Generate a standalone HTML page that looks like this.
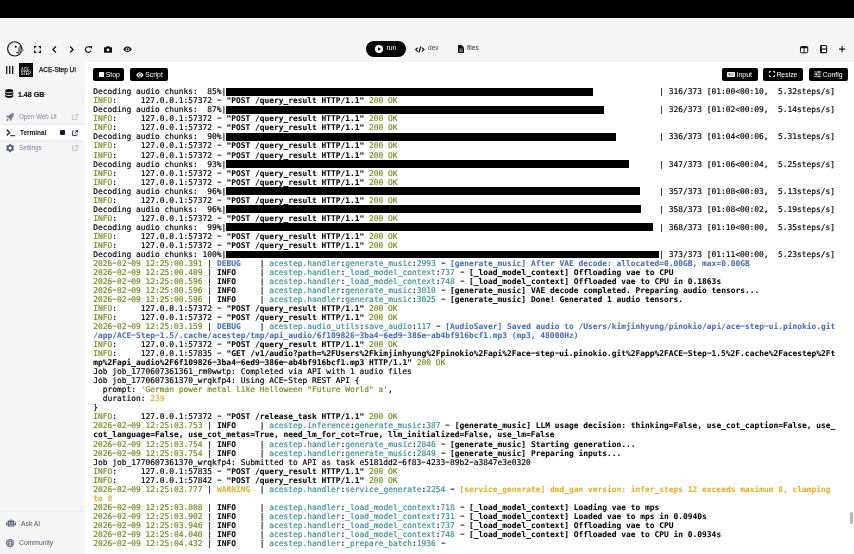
<!DOCTYPE html>
<html lang="en">
<head>
<meta charset="utf-8">
<title>ACE-Step UI</title>
<style>
*{box-sizing:border-box;margin:0;padding:0}
body{will-change:transform}
html,body{width:854px;height:554px;overflow:hidden;background:#f5f5f5;font-family:"Liberation Sans",sans-serif;color:#111}
#topbar{position:absolute;left:0;top:0;width:854px;height:18px;background:#000}
#header{position:absolute;left:0;top:18px;width:854px;height:44px;background:#f5f5f5}
#sidebar{position:absolute;left:0;top:62px;width:85px;height:492px;background:#f5f5f5}
#main{position:absolute;left:85px;top:62px;width:769px;height:492px;background:#fff;box-shadow:-0.4px 0 0 #fff}
.abs{position:absolute}
svg{display:block;position:absolute;overflow:visible}
.btn{position:absolute;top:5.6px;height:13.9px;background:#000;color:#fff;border-radius:2px;font-size:6.9px;line-height:13.9px;white-space:nowrap}
.btn span{position:absolute;top:0}
#term{position:absolute;left:8.2px;letter-spacing:0.0055px;top:25.3px;width:760px;font-family:"DejaVu Sans Mono","Liberation Mono",monospace;font-size:7.905px;line-height:9.035px;color:#000;-webkit-text-stroke:0.17px currentColor}
.ln{height:9.035px;white-space:pre}
.ln b{font-weight:bold;-webkit-text-stroke:0.06px currentColor}
.ln i{display:inline-block;font-style:normal;transform:translateY(-0.7px) scale(1.75,0.85)}
.g{color:#728c22}
.c{color:#3a8e9b}
.bl{color:#4870b2}
.y{color:#e0b030}
.yn{color:#e0b030}
.bar{display:inline-block;height:7.85px;background:#000;color:#000;overflow:hidden;vertical-align:top;margin-top:0.7px;line-height:7.75px}
.gap{display:inline-block;height:7.6px;overflow:hidden;vertical-align:top}
.sitem{position:absolute;left:0;width:85px;font-size:7px;color:#7d8aa3;white-space:nowrap}
.sitem span{position:absolute;transform-origin:0 50%}
.sx{transform-origin:0 50%}
</style>
</head>
<body>
<div id="topbar"></div>
<div id="header">
  <!-- pinokio logo -->
  <svg style="left:6px;top:22px" width="20" height="18" viewBox="0 0 20 18">
    <circle cx="8.7" cy="8.85" r="7.1" fill="#f5f5f5" stroke="#111" stroke-width="1.1"/>
    <circle cx="9.7" cy="6.8" r="1" fill="#111"/>
    <circle cx="14" cy="6.7" r="0.75" fill="#111"/>
    <path d="M11.6 7.5 L18.2 10.2 L12.2 12.6 Z" fill="#f5f5f5"/>
    <path d="M12.3 8 H15.4 M12.1 9.1 H17 M12 10.2 H17.9 M12.2 11.3 H16.4" stroke="#222" stroke-width="0.66" fill="none"/>
    <path d="M10.3 12.7 H13.1" stroke="#111" stroke-width="1.1" fill="none"/>
  </svg>
  <!-- expand -->
  <svg style="left:34px;top:27.8px" width="7" height="7" viewBox="0 0 7 7">
    <path d="M0.6 2.4 V0.6 H2.4 M4.6 0.6 H6.4 V2.4 M6.4 4.6 V6.4 H4.6 M2.4 6.4 H0.6 V4.6" fill="none" stroke="#111" stroke-width="1.2"/>
  </svg>
  <!-- chevrons -->
  <svg style="left:52px;top:27.8px" width="5" height="7" viewBox="0 0 5 7">
    <path d="M3.9 0.5 L0.9 3.5 L3.9 6.5" fill="none" stroke="#111" stroke-width="1.25"/>
  </svg>
  <svg style="left:68.6px;top:27.8px" width="5" height="7" viewBox="0 0 5 7">
    <path d="M1.1 0.5 L4.1 3.5 L1.1 6.5" fill="none" stroke="#111" stroke-width="1.25"/>
  </svg>
  <!-- reload -->
  <svg style="left:85px;top:28px" width="7.4" height="7" viewBox="0 0 7.4 7">
    <path d="M5.9 4.6 A2.8 2.8 0 1 1 5.2 1.5" fill="none" stroke="#111" stroke-width="1.2"/>
    <path d="M4.1 0 H7.1 V3 Z" fill="#111"/>
  </svg>
  <!-- camera -->
  <svg style="left:104px;top:27.6px" width="8" height="7" viewBox="0 0 8 7">
    <path d="M0 1.8 Q0 1.2 .6 1.2 H2 L2.6 0.2 H5.4 L6 1.2 H7.4 Q8 1.2 8 1.8 V6.2 Q8 6.8 7.4 6.8 H0.6 Q0 6.8 0 6.2 Z" fill="#111"/>
    <circle cx="4" cy="3.9" r="1.3" fill="#f5f5f5"/>
  </svg>
  <!-- eye -->
  <svg style="left:123px;top:28px" width="9" height="6.6" viewBox="0 0 9 6.6">
    <path d="M0.2 3.3 Q2 0.3 4.5 0.3 Q7 0.3 8.8 3.3 Q7 6.3 4.5 6.3 Q2 6.3 0.2 3.3 Z" fill="#111"/>
    <circle cx="4.5" cy="3.3" r="1.9" fill="#f5f5f5"/>
    <circle cx="4.5" cy="3.3" r="1.15" fill="#111"/>
  </svg>
  <!-- run pill -->
  <div class="abs" style="left:365.9px;top:23.2px;width:39.7px;height:15.7px;border-radius:8px;background:#000"></div>
  <svg style="left:375.4px;top:27px" width="8" height="8" viewBox="0 0 8 8">
    <circle cx="4" cy="4" r="4" fill="#fff"/>
    <path d="M3 2.2 L6 4 L3 5.8 Z" fill="#000"/>
  </svg>
  <div class="abs" style="left:386.4px;top:25px;font-size:6.8px;line-height:9px;color:#fff">run</div>
  <!-- dev -->
  <svg style="left:415.3px;top:27.5px" width="9.6" height="7.2" viewBox="0 0 10.4 7.2">
    <path d="M2.9 1.4 L0.8 3.6 L2.9 5.8 M7.5 1.4 L9.6 3.6 L7.5 5.8 M6.2 0.3 L4.2 6.9" fill="none" stroke="#111" stroke-width="1.35"/>
  </svg>
  <div class="abs" style="left:428px;top:25px;font-size:6.6px;line-height:9px;color:#444">dev</div>
  <!-- files -->
  <svg style="left:458px;top:27.2px" width="6" height="8" viewBox="0 0 6 8">
    <path d="M0 0.6 Q0 0 .6 0 H3.6 L6 2.4 V7.4 Q6 8 5.4 8 H0.6 Q0 8 0 7.4 Z" fill="#111"/>
    <path d="M1.3 4 H4.7 M1.3 5.4 H4.7 M1.3 6.7 H4.7" stroke="#f5f5f5" stroke-width="0.5"/>
  </svg>
  <div class="abs" style="left:467px;top:25px;font-size:6.6px;line-height:9px;color:#333">files</div>
  <!-- right icons -->
  <svg style="left:800px;top:27.6px" width="8.2" height="7.3" viewBox="0 0 8.2 7.3">
    <rect x="0.5" y="0.5" width="7.2" height="6.3" rx="1" fill="#fbfbfb" stroke="#111" stroke-width="1"/>
    <path d="M0.5 1.5 H7.7" stroke="#111" stroke-width="1.4"/><path d="M4.1 1 V6.8" stroke="#111" stroke-width="1"/>
  </svg>
  <svg style="left:820px;top:27.2px" width="7.2" height="8.2" viewBox="0 0 7.2 8.2">
    <rect x="0.55" y="0.55" width="6.1" height="7.1" rx="1" fill="#fbfbfb" stroke="#111" stroke-width="1.1"/>
    <path d="M1.1 0.6 V7.6" stroke="#111" stroke-width="1.5"/>
    <path d="M0.5 4.1 H6.7" stroke="#111" stroke-width="1.2"/>
  </svg>
  <svg style="left:839px;top:28.1px" width="6.2" height="6.2" viewBox="0 0 6.2 6.2">
    <path d="M3.1 0 V6.2 M0 3.1 H6.2" stroke="#111" stroke-width="1.1"/>
  </svg>
</div>

<div id="sidebar">
  <!-- app row -->
  <svg style="left:5.8px;top:3.9px" width="7.4" height="7.9" viewBox="0 0 7.4 7.9">
    <path d="M0.7 0 V7.9 M3.7 0 V7.9 M6.7 0 V7.9" stroke="#111" stroke-width="1.25"/>
  </svg>
  <div class="abs" style="left:19px;top:1px;width:14.2px;height:14px;background:#000;overflow:hidden">
    <div class="abs" style="left:2.1px;top:5px;font-size:4.5px;line-height:4px;font-weight:bold;color:#ddd;transform:scaleX(0.83);transform-origin:0 0;white-space:nowrap">ACE-<br>STEP</div>
  </div>
  <div class="abs sx" style="left:39px;top:3.2px;font-size:7px;line-height:9px;color:#111;white-space:nowrap;-webkit-text-stroke:0.25px #111;transform:scaleX(0.926)">ACE-Step UI</div>
  <!-- disk -->
  <svg style="left:5.4px;top:27.2px" width="8.4" height="9.4" viewBox="0 0 8 9">
    <ellipse cx="4" cy="1.6" rx="3.9" ry="1.6" fill="#111"/>
    <path d="M0.1 2.8 Q4 5.2 7.9 2.8 V4.7 Q4 7 0.1 4.7 Z M0.1 5.6 Q4 8 7.9 5.6 V7.4 Q4 9.7 0.1 7.4 Z" fill="#111"/>
  </svg>
  <div class="abs sx" style="left:18.2px;top:28.2px;font-size:7.3px;line-height:9px;font-weight:bold;color:#111;white-space:nowrap;-webkit-text-stroke:0.2px #111;transform:scaleX(0.965)">1.48 GB</div>

  <div class="abs" style="left:83.6px;top:26px;width:0.7px;height:14px;background:#ebebeb"></div>
  <!-- Open Web UI -->
  <div class="sitem" style="top:46px;height:16px">
    <svg style="left:6px;top:5.2px" width="8.2" height="8.2" viewBox="0 0 8.4 8.4">
      <path d="M8.2 0.2 Q8.4 3.4 5.9 5.4 L5.6 7.4 L4.2 8.2 L3.9 6.2 L2.2 4.5 L0.2 4.2 L1 2.8 L3 2.5 Q5 0 8.2 0.2 Z" fill="#6f7d98"/>
      <path d="M0.4 8 Q0.3 6.2 1.6 5.6 L2.8 6.8 Q2.2 8.1 0.4 8 Z" fill="#6f7d98"/>
    </svg>
    <span style="left:19px;top:3.9px;line-height:9px;transform:scaleX(0.895)">Open Web UI</span>
    <svg style="left:71.5px;top:6.2px" width="6" height="6" viewBox="0 0 6 6">
      <path d="M2.4 0.9 H0.9 Q0.4 0.9 0.4 1.4 V5.1 Q0.4 5.6 0.9 5.6 H4.6 Q5.1 5.6 5.1 5.1 V3.6 M3.5 0.4 H5.6 V2.5 M5.6 0.4 L2.8 3.2" fill="none" stroke="#a9b2c3" stroke-width="0.75"/>
    </svg>
  </div>
  <!-- Terminal (selected) -->
  <div class="sitem" style="top:63px;height:15.2px;background:#fff;box-shadow:0 0 4px rgba(0,0,0,0.08);color:#111">
    <svg style="left:6px;top:4.4px" width="9.2" height="7.4" viewBox="0 0 9.2 7.4">
      <path d="M0.6 0.5 L3.7 3.5 L0.6 6.5" fill="none" stroke="#1c2540" stroke-width="1.25"/>
      <path d="M4.4 6.7 H9.1" stroke="#1c2540" stroke-width="1.1"/>
    </svg>
    <span style="left:20px;top:3.4px;line-height:9px;font-weight:bold;font-size:6.8px;transform:scaleX(0.95)">Terminal</span>
    <div class="abs" style="left:59.9px;top:4.8px;width:5.1px;height:4.9px;background:#131a33;border-radius:1px"></div>
    <svg style="left:71.5px;top:4.7px" width="6" height="6" viewBox="0 0 6 6">
      <path d="M2.4 0.9 H0.9 Q0.4 0.9 0.4 1.4 V5.1 Q0.4 5.6 0.9 5.6 H4.6 Q5.1 5.6 5.1 5.1 V3.6 M3.5 0.4 H5.6 V2.5 M5.6 0.4 L2.8 3.2" fill="none" stroke="#1c2540" stroke-width="0.9"/>
    </svg>
  </div>
  <!-- Settings -->
  <div class="sitem" style="top:78px;height:16px">
    <svg style="left:6px;top:4.2px" width="8.2" height="8.2" viewBox="0 0 8.4 8.4">
      <circle cx="4.2" cy="4.2" r="2.5" fill="none" stroke="#56627d" stroke-width="1.9"/>
      <g fill="#56627d">
        <rect x="3.3" y="0" width="1.8" height="1.6"/><rect x="3.3" y="6.8" width="1.8" height="1.6"/>
        <rect x="3.3" y="0" width="1.8" height="1.6" transform="rotate(60 4.2 4.2)"/><rect x="3.3" y="6.8" width="1.8" height="1.6" transform="rotate(60 4.2 4.2)"/>
        <rect x="3.3" y="0" width="1.8" height="1.6" transform="rotate(120 4.2 4.2)"/><rect x="3.3" y="6.8" width="1.8" height="1.6" transform="rotate(120 4.2 4.2)"/>
      </g>
    </svg>
    <span style="left:19px;top:3.4px;line-height:9px;transform:scaleX(0.89)">Settings</span>
    <svg style="left:71.5px;top:5.4px" width="6" height="6" viewBox="0 0 6 6">
      <path d="M2.4 0.9 H0.9 Q0.4 0.9 0.4 1.4 V5.1 Q0.4 5.6 0.9 5.6 H4.6 Q5.1 5.6 5.1 5.1 V3.6 M3.5 0.4 H5.6 V2.5 M5.6 0.4 L2.8 3.2" fill="none" stroke="#a9b2c3" stroke-width="0.75"/>
    </svg>
  </div>

  <!-- bottom -->
  <div class="abs" style="left:0;top:449px;width:85px;height:1px;background:#ebebeb"></div>
  <div class="sitem" style="top:453px;height:18px;color:#4a556e">
    <svg style="left:6px;top:4.4px" width="10" height="8" viewBox="0 0 10 8">
      <rect x="1.5" y="1.6" width="7" height="6" rx="1.2" fill="#56627d"/>
      <rect x="0" y="3.6" width="1" height="2.6" fill="#56627d"/><rect x="9" y="3.6" width="1" height="2.6" fill="#56627d"/>
      <rect x="4.6" y="0" width="0.8" height="1.8" fill="#56627d"/>
      <circle cx="3.6" cy="4" r="0.8" fill="#f5f5f5"/><circle cx="6.4" cy="4" r="0.8" fill="#f5f5f5"/>
      <rect x="3.2" y="5.7" width="3.6" height="0.7" fill="#f5f5f5"/>
    </svg>
    <span style="left:20.5px;top:4px;line-height:9px;transform:scaleX(0.97)">Ask AI</span>
  </div>
  <div class="sitem" style="top:471px;height:18px;color:#4a556e">
    <svg style="left:6px;top:5.8px" width="8.2" height="8.2" viewBox="0 0 8.4 8.4">
      <circle cx="4.2" cy="4.2" r="3.8" fill="none" stroke="#56627d" stroke-width="0.9"/>
      <ellipse cx="4.2" cy="4.2" rx="1.7" ry="3.8" fill="none" stroke="#56627d" stroke-width="0.8"/>
      <path d="M0.4 4.2 H8 M1 2.3 H7.4 M1 6.1 H7.4" stroke="#56627d" stroke-width="0.8"/>
    </svg>
    <span style="left:19px;top:4.8px;line-height:9px;transform:scaleX(0.965)">Community</span>
  </div>
</div>

<div id="main">
  <div class="btn" style="left:8.1px;width:31.3px">
    <div class="abs" style="left:5.8px;top:4.1px;width:5px;height:5.4px;background:#fff;border-radius:0.6px"></div>
    <span style="left:12.6px">Stop</span>
  </div>
  <div class="btn" style="left:45px;width:38.4px">
    <svg style="left:5.6px;top:4px" width="7.8" height="5.9" viewBox="0 0 9 6.6">
      <path d="M0.2 3.3 Q2 0.3 4.5 0.3 Q7 0.3 8.8 3.3 Q7 6.3 4.5 6.3 Q2 6.3 0.2 3.3 Z" fill="#fff"/>
      <circle cx="4.5" cy="3.3" r="2" fill="#000"/>
      <circle cx="4.5" cy="3.3" r="1.1" fill="#fff"/>
    </svg>
    <span style="left:15.2px">Script</span>
  </div>
  <div class="btn" style="left:637px;width:35.7px">
    <svg style="left:5px;top:4.4px" width="8" height="5" viewBox="0 0 8 5">
      <rect x="0" y="0" width="8" height="5" rx="0.7" fill="#fff"/>
      <path d="M1 1.3 H7 M1 2.5 H7 M2 3.8 H6" stroke="#000" stroke-width="0.6" stroke-dasharray="0.7 0.5"/>
    </svg>
    <span style="left:14.6px">Input</span>
  </div>
  <div class="btn" style="left:678px;width:40px">
    <svg style="left:5.6px;top:3.8px" width="6" height="6" viewBox="0 0 7 7">
      <path d="M0.5 2.3 V0.5 H2.3 M4.7 0.5 H6.5 V2.3 M6.5 4.7 V6.5 H4.7 M2.3 6.5 H0.5 V4.7" fill="none" stroke="#fff" stroke-width="1.1"/>
    </svg>
    <span style="left:13.4px">Resize</span>
  </div>
  <div class="btn" style="left:723.7px;width:39.5px">
    <svg style="left:5.6px;top:3.9px" width="7.2" height="6.4" viewBox="0 0 7.2 6.4">
      <path d="M0 1 H7.2 M0 3.2 H7.2 M0 5.4 H7.2" stroke="#fff" stroke-width="0.7"/>
      <path d="M4.9 0 V2 M2.3 2.2 V4.2 M4.9 4.4 V6.4" stroke="#fff" stroke-width="1"/>
    </svg>
    <span style="left:14px">Config</span>
  </div>
  <div id="term">
<div class="ln"><span>Decoding audio chunks:  85%|</span><span class="bar" style="width:366.22px">█████████████████████████████████████████████████████████████████████████████</span><span class="gap" style="width:66.59px">              </span><span>| 316/373 [01:00&lt;00:10,  5.32steps/s]</span></div><div class="ln"><span class="g">INFO</span>:     127.0.0.1:57372 <i>-</i> <b>"POST /query_result HTTP/1.1"</b> <span class="g">200 OK</span></div><div class="ln"><span>Decoding audio chunks:  87%|</span><span class="bar" style="width:378.11px">███████████████████████████████████████████████████████████████████████████████▌</span><span class="gap" style="width:54.70px">           </span><span>| 326/373 [01:02&lt;00:09,  5.14steps/s]</span></div><div class="ln"><span class="g">INFO</span>:     127.0.0.1:57372 <i>-</i> <b>"POST /query_result HTTP/1.1"</b> <span class="g">200 OK</span></div><div class="ln"><span class="g">INFO</span>:     127.0.0.1:57372 <i>-</i> <b>"POST /query_result HTTP/1.1"</b> <span class="g">200 OK</span></div><div class="ln"><span>Decoding audio chunks:  90%|</span><span class="bar" style="width:389.41px">█████████████████████████████████████████████████████████████████████████████████▉</span><span class="gap" style="width:43.40px">         </span><span>| 336/373 [01:04&lt;00:06,  5.31steps/s]</span></div><div class="ln"><span class="g">INFO</span>:     127.0.0.1:57372 <i>-</i> <b>"POST /query_result HTTP/1.1"</b> <span class="g">200 OK</span></div><div class="ln"><span class="g">INFO</span>:     127.0.0.1:57372 <i>-</i> <b>"POST /query_result HTTP/1.1"</b> <span class="g">200 OK</span></div><div class="ln"><span>Decoding audio chunks:  93%|</span><span class="bar" style="width:402.48px">████████████████████████████████████████████████████████████████████████████████████▋</span><span class="gap" style="width:30.32px">      </span><span>| 347/373 [01:06&lt;00:04,  5.25steps/s]</span></div><div class="ln"><span class="g">INFO</span>:     127.0.0.1:57372 <i>-</i> <b>"POST /query_result HTTP/1.1"</b> <span class="g">200 OK</span></div><div class="ln"><span class="g">INFO</span>:     127.0.0.1:57372 <i>-</i> <b>"POST /query_result HTTP/1.1"</b> <span class="g">200 OK</span></div><div class="ln"><span>Decoding audio chunks:  96%|</span><span class="bar" style="width:413.78px">███████████████████████████████████████████████████████████████████████████████████████</span><span class="gap" style="width:19.02px">    </span><span>| 357/373 [01:08&lt;00:03,  5.13steps/s]</span></div><div class="ln"><span class="g">INFO</span>:     127.0.0.1:57372 <i>-</i> <b>"POST /query_result HTTP/1.1"</b> <span class="g">200 OK</span></div><div class="ln"><span>Decoding audio chunks:  96%|</span><span class="bar" style="width:414.97px">███████████████████████████████████████████████████████████████████████████████████████▎</span><span class="gap" style="width:17.84px">   </span><span>| 358/373 [01:08&lt;00:02,  5.19steps/s]</span></div><div class="ln"><span class="g">INFO</span>:     127.0.0.1:57372 <i>-</i> <b>"POST /query_result HTTP/1.1"</b> <span class="g">200 OK</span></div><div class="ln"><span>Decoding audio chunks:  99%|</span><span class="bar" style="width:426.86px">█████████████████████████████████████████████████████████████████████████████████████████▊</span><span class="gap" style="width:5.95px"> </span><span>| 368/373 [01:10&lt;00:00,  5.35steps/s]</span></div><div class="ln"><span class="g">INFO</span>:     127.0.0.1:57372 <i>-</i> <b>"POST /query_result HTTP/1.1"</b> <span class="g">200 OK</span></div><div class="ln"><span class="g">INFO</span>:     127.0.0.1:57372 <i>-</i> <b>"POST /query_result HTTP/1.1"</b> <span class="g">200 OK</span></div><div class="ln"><span>Decoding audio chunks: 100%|</span><span class="bar" style="width:432.81px">███████████████████████████████████████████████████████████████████████████████████████████</span><span class="gap" style="width:0.00px"></span><span>| 373/373 [01:11&lt;00:00,  5.23steps/s]</span></div><div class="ln"><span class="g">2026<i>-</i>02<i>-</i>09 12:25:00.391</span> | <b class="bl">DEBUG   </b> | <span class="c">acestep.handler</span>:<span class="c">generate_music</span>:<span class="c">2993</span> <i>-</i> <b class="bl">[generate_music] After VAE decode: allocated=0.00GB, max=0.00GB</b></div><div class="ln"><span class="g">2026<i>-</i>02<i>-</i>09 12:25:00.409</span> | <b class="">INFO    </b> | <span class="c">acestep.handler</span>:<span class="c">_load_model_context</span>:<span class="c">737</span> <i>-</i> <b class="">[_load_model_context] Offloading vae to CPU</b></div><div class="ln"><span class="g">2026<i>-</i>02<i>-</i>09 12:25:00.596</span> | <b class="">INFO    </b> | <span class="c">acestep.handler</span>:<span class="c">_load_model_context</span>:<span class="c">748</span> <i>-</i> <b class="">[_load_model_context] Offloaded vae to CPU in 0.1863s</b></div><div class="ln"><span class="g">2026<i>-</i>02<i>-</i>09 12:25:00.596</span> | <b class="">INFO    </b> | <span class="c">acestep.handler</span>:<span class="c">generate_music</span>:<span class="c">3010</span> <i>-</i> <b class="">[generate_music] VAE decode completed. Preparing audio tensors...</b></div><div class="ln"><span class="g">2026<i>-</i>02<i>-</i>09 12:25:00.596</span> | <b class="">INFO    </b> | <span class="c">acestep.handler</span>:<span class="c">generate_music</span>:<span class="c">3025</span> <i>-</i> <b class="">[generate_music] Done! Generated 1 audio tensors.</b></div><div class="ln"><span class="g">INFO</span>:     127.0.0.1:57372 <i>-</i> <b>"POST /query_result HTTP/1.1"</b> <span class="g">200 OK</span></div><div class="ln"><span class="g">INFO</span>:     127.0.0.1:57372 <i>-</i> <b>"POST /query_result HTTP/1.1"</b> <span class="g">200 OK</span></div><div class="ln"><span class="g">2026<i>-</i>02<i>-</i>09 12:25:03.159</span> | <b class="bl">DEBUG   </b> | <span class="c">acestep.audio_utils</span>:<span class="c">save_audio</span>:<span class="c">117</span> <i>-</i> <b class="bl">[AudioSaver] Saved audio to /Users/kimjinhyung/pinokio/api/ace<i>-</i>step<i>-</i>ui.pinokio.git</b></div><div class="ln"><b class="bl">/app/ACE<i>-</i>Step<i>-</i>1.5/.cache/acestep/tmp/api_audio/6f109826<i>-</i>3ba4<i>-</i>6ed9<i>-</i>386e<i>-</i>ab4bf916bcf1.mp3 (mp3, 48000Hz)</b></div><div class="ln"><span class="g">INFO</span>:     127.0.0.1:57372 <i>-</i> <b>"POST /query_result HTTP/1.1"</b> <span class="g">200 OK</span></div><div class="ln"><span class="g">INFO</span>:     127.0.0.1:57835 <i>-</i> <b>"GET /v1/audio?path=%2FUsers%2Fkimjinhyung%2Fpinokio%2Fapi%2Face<i>-</i>step<i>-</i>ui.pinokio.git%2Fapp%2FACE<i>-</i>Step<i>-</i>1.5%2F.cache%2Facestep%2Ft</b></div><div class="ln"><b>mp%2Fapi_audio%2F6f109826<i>-</i>3ba4<i>-</i>6ed9<i>-</i>386e<i>-</i>ab4bf916bcf1.mp3 HTTP/1.1"</b> <span class="g">200 OK</span></div><div class="ln">Job job_1770607361361_rm0wwtp: Completed via API with 1 audio files</div><div class="ln">Job job_1770607361370_wrqkfp4: Using ACE<i>-</i>Step REST API {</div><div class="ln">  prompt: <span class="g">'German power metal like Helloween "Future World" a'</span>,</div><div class="ln">  duration: <span class="yn">239</span></div><div class="ln">}</div><div class="ln"><span class="g">INFO</span>:     127.0.0.1:57372 <i>-</i> <b>"POST /release_task HTTP/1.1"</b> <span class="g">200 OK</span></div><div class="ln"><span class="g">2026<i>-</i>02<i>-</i>09 12:25:03.753</span> | <b class="">INFO    </b> | <span class="c">acestep.inference</span>:<span class="c">generate_music</span>:<span class="c">387</span> <i>-</i> <b class="">[generate_music] LLM usage decision: thinking=False, use_cot_caption=False, use_</b></div><div class="ln"><b>cot_language=False, use_cot_metas=True, need_lm_for_cot=True, llm_initialized=False, use_lm=False</b></div><div class="ln"><span class="g">2026<i>-</i>02<i>-</i>09 12:25:03.754</span> | <b class="">INFO    </b> | <span class="c">acestep.handler</span>:<span class="c">generate_music</span>:<span class="c">2846</span> <i>-</i> <b class="">[generate_music] Starting generation...</b></div><div class="ln"><span class="g">2026<i>-</i>02<i>-</i>09 12:25:03.754</span> | <b class="">INFO    </b> | <span class="c">acestep.handler</span>:<span class="c">generate_music</span>:<span class="c">2849</span> <i>-</i> <b class="">[generate_music] Preparing inputs...</b></div><div class="ln">Job job_1770607361370_wrqkfp4: Submitted to API as task e5181dd2<i>-</i>6f83<i>-</i>4233<i>-</i>89b2<i>-</i>a3847e3e0320</div><div class="ln"><span class="g">INFO</span>:     127.0.0.1:57835 <i>-</i> <b>"POST /query_result HTTP/1.1"</b> <span class="g">200 OK</span></div><div class="ln"><span class="g">INFO</span>:     127.0.0.1:57842 <i>-</i> <b>"POST /query_result HTTP/1.1"</b> <span class="g">200 OK</span></div><div class="ln"><span class="g">2026<i>-</i>02<i>-</i>09 12:25:03.777</span> | <b class="y">WARNING </b> | <span class="c">acestep.handler</span>:<span class="c">service_generate</span>:<span class="c">2254</span> <i>-</i> <b class="y">[service_generate] dmd_gan version: infer_steps 12 exceeds maximum 8, clamping </b></div><div class="ln"><b class="y">to 8</b></div><div class="ln"><span class="g">2026<i>-</i>02<i>-</i>09 12:25:03.808</span> | <b class="">INFO    </b> | <span class="c">acestep.handler</span>:<span class="c">_load_model_context</span>:<span class="c">718</span> <i>-</i> <b class="">[_load_model_context] Loading vae to mps</b></div><div class="ln"><span class="g">2026<i>-</i>02<i>-</i>09 12:25:03.902</span> | <b class="">INFO    </b> | <span class="c">acestep.handler</span>:<span class="c">_load_model_context</span>:<span class="c">731</span> <i>-</i> <b class="">[_load_model_context] Loaded vae to mps in 0.0940s</b></div><div class="ln"><span class="g">2026<i>-</i>02<i>-</i>09 12:25:03.946</span> | <b class="">INFO    </b> | <span class="c">acestep.handler</span>:<span class="c">_load_model_context</span>:<span class="c">737</span> <i>-</i> <b class="">[_load_model_context] Offloading vae to CPU</b></div><div class="ln"><span class="g">2026<i>-</i>02<i>-</i>09 12:25:04.040</span> | <b class="">INFO    </b> | <span class="c">acestep.handler</span>:<span class="c">_load_model_context</span>:<span class="c">748</span> <i>-</i> <b class="">[_load_model_context] Offloaded vae to CPU in 0.0934s</b></div><div class="ln"><span class="g">2026<i>-</i>02<i>-</i>09 12:25:04.432</span> | <b>INFO    </b> | <span class="c">acestep.handler</span>:<span class="c">_prepare_batch</span>:<span class="c">1936</span> <i>-</i> </div>
  </div>
  <div class="abs" style="left:764.8px;top:450px;width:3.2px;height:12.4px;border-radius:1.6px;background:#b8b8b8"></div>
</div>
</body>
</html>
